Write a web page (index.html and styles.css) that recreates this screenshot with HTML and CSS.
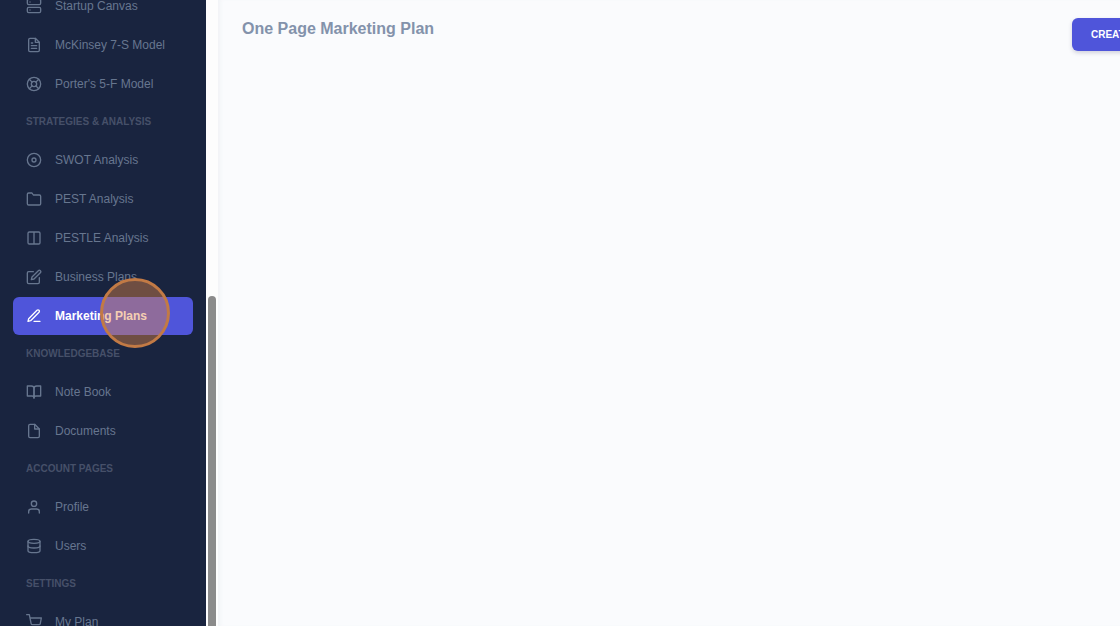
FILE: index.html
```html
<!DOCTYPE html>
<html lang="en">
<head>
    <meta charset="UTF-8">
    <meta name="viewport" content="width=device-width, initial-scale=1.0">
    <title>One Page Marketing Plan</title>
    <link rel="stylesheet" href="styles.css">
</head>
<body>
    <div class="app">
        <aside class="sidebar">
            <nav class="menu">
                <a href="#" class="menu-item">
                    <svg class="icon" viewBox="0 0 24 24"><rect x="2" y="2" width="20" height="8" rx="2"/><rect x="2" y="14" width="20" height="8" rx="2"/><path d="M6 6h.01M6 18h.01"/></svg>
                    Startup Canvas
                </a>
                <a href="#" class="menu-item">
                    <svg class="icon" viewBox="0 0 24 24"><path d="M14 2H6a2 2 0 0 0-2 2v16a2 2 0 0 0 2 2h12a2 2 0 0 0 2-2V8z"/><path d="M14 2v6h6M16 13H8M16 17H8M10 9H8"/></svg>
                    McKinsey 7-S Model
                </a>
                <a href="#" class="menu-item">
                    <svg class="icon" viewBox="0 0 24 24"><circle cx="12" cy="12" r="10"/><circle cx="12" cy="12" r="4"/><path d="M4.93 4.93l4.24 4.24M14.83 14.83l4.24 4.24M14.83 9.17l4.24-4.24M4.93 19.07l4.24-4.24"/></svg>
                    Porter's 5-F Model
                </a>

                <h6 class="menu-title">STRATEGIES &amp; ANALYSIS</h6>
                <a href="#" class="menu-item">
                    <svg class="icon" viewBox="0 0 24 24"><circle cx="12" cy="12" r="10"/><circle cx="12" cy="12" r="3"/></svg>
                    SWOT Analysis
                </a>
                <a href="#" class="menu-item">
                    <svg class="icon" viewBox="0 0 24 24"><path d="M22 19a2 2 0 0 1-2 2H4a2 2 0 0 1-2-2V5a2 2 0 0 1 2-2h5l2 3h9a2 2 0 0 1 2 2z"/></svg>
                    PEST Analysis
                </a>
                <a href="#" class="menu-item">
                    <svg class="icon" viewBox="0 0 24 24"><path d="M12 3h7a2 2 0 0 1 2 2v14a2 2 0 0 1-2 2h-7m0-18H5a2 2 0 0 0-2 2v14a2 2 0 0 0 2 2h7m0-18v18"/></svg>
                    PESTLE Analysis
                </a>
                <a href="#" class="menu-item">
                    <svg class="icon" viewBox="0 0 24 24"><path d="M11 4H4a2 2 0 0 0-2 2v14a2 2 0 0 0 2 2h14a2 2 0 0 0 2-2v-7"/><path d="M18.5 2.5a2.121 2.121 0 0 1 3 3L12 15l-4 1 1-4 9.5-9.5z"/></svg>
                    Business Plans
                </a>
                <a href="#" class="menu-item active">
                    <svg class="icon" viewBox="0 0 24 24"><path d="M12 20h9"/><path d="M16.5 3.5a2.121 2.121 0 0 1 3 3L7 19l-4 1 1-4L16.5 3.5z"/></svg>
                    Marketing Plans
                    <span class="click-marker"></span>
                </a>

                <h6 class="menu-title">KNOWLEDGEBASE</h6>
                <a href="#" class="menu-item">
                    <svg class="icon" viewBox="0 0 24 24"><path d="M2 3h6a4 4 0 0 1 4 4v14a3 3 0 0 0-3-3H2z"/><path d="M22 3h-6a4 4 0 0 0-4 4v14a3 3 0 0 1 3-3h7z"/></svg>
                    Note Book
                </a>
                <a href="#" class="menu-item">
                    <svg class="icon" viewBox="0 0 24 24"><path d="M13 2H6a2 2 0 0 0-2 2v16a2 2 0 0 0 2 2h12a2 2 0 0 0 2-2V9z"/><path d="M13 2v7h7"/></svg>
                    Documents
                </a>

                <h6 class="menu-title">ACCOUNT PAGES</h6>
                <a href="#" class="menu-item">
                    <svg class="icon" viewBox="0 0 24 24"><path d="M20 21v-2a4 4 0 0 0-4-4H8a4 4 0 0 0-4 4v2"/><circle cx="12" cy="7" r="4"/></svg>
                    Profile
                </a>
                <a href="#" class="menu-item">
                    <svg class="icon" viewBox="0 0 24 24"><ellipse cx="12" cy="5" rx="9" ry="3"/><path d="M21 12c0 1.66-4 3-9 3s-9-1.34-9-3"/><path d="M3 5v14c0 1.66 4 3 9 3s9-1.34 9-3V5"/></svg>
                    Users
                </a>

                <h6 class="menu-title">SETTINGS</h6>
                <a href="#" class="menu-item">
                    <svg class="icon" viewBox="0 0 24 24"><circle cx="9" cy="21" r="1"/><circle cx="20" cy="21" r="1"/><path d="M1 1h4l2.68 13.39a2 2 0 0 0 2 1.61h9.72a2 2 0 0 0 2-1.61L23 6H6"/></svg>
                    My Plan
                </a>
            </nav>
        </aside>
        <div class="scrollbar">
            <div class="scrollbar-thumb"></div>
        </div>
        <main class="content">
            <header class="page-header">
                <h1>One Page Marketing Plan</h1>
                <button type="button" class="btn-create">CREATE</button>
            </header>
        </main>
    </div>
</body>
</html>
```

FILE: styles.css
```css
* {
    box-sizing: border-box;
}
body {
    margin: 0;
    font-family: "Liberation Sans", Arial, sans-serif;
    background-color: #fafbfd;
}
.app {
    display: flex;
    height: 100vh;
    overflow: hidden;
}

/* Sidebar */
.sidebar {
    flex: 0 0 206px;
    padding: 0 13px;
    background-color: #19243f;
    overflow: hidden;
}
.menu {
    /* list is scrolled down */
    margin-top: -13px;
}
.menu-item {
    position: relative;
    display: flex;
    align-items: center;
    gap: 13px;
    height: 38px;
    margin-bottom: 1px;
    padding: 0 13px;
    border-radius: 6px;
    color: #67768f;
    font-size: 12px;
    text-decoration: none;
    white-space: nowrap;
}
.menu-item.active {
    background-color: #4f55da;
    color: #fff;
    font-weight: bold;
}
.icon {
    flex: none;
    width: 16px;
    height: 16px;
    fill: none;
    stroke: currentColor;
    stroke-width: 2;
    stroke-linecap: round;
    stroke-linejoin: round;
}
.menu-title {
    margin: 0;
    padding: 0 0 2px 13px;
    color: #465069;
    font-size: 10px;
    font-weight: bold;
    line-height: 35px;
}
.click-marker {
    position: absolute;
    top: -19px;
    left: 87px;
    z-index: 1;
    width: 70px;
    height: 70px;
    border: 3px solid #c27a45;
    border-radius: 50%;
    background-color: rgba(232, 139, 71, 0.42);
    pointer-events: none;
}

/* Scrollbar */
.scrollbar {
    flex: 0 0 12px;
    padding: 296px 2px 0;
    background-color: #fdfdfd;
}
.scrollbar-thumb {
    height: 100%;
    border-radius: 4px 4px 0 0;
    background-color: #8b8b8b;
}

/* Content */
.content {
    flex: 1;
    min-width: 0;
    padding: 18px 0 0 24px;
    box-shadow: inset 4px 0 4px -2px #f0f2f5;
}
.page-header {
    display: flex;
    align-items: flex-start;
    justify-content: space-between;
}
h1 {
    margin: 0;
    color: #8392ab;
    font-size: 16px;
    line-height: 21px;
}
.btn-create {
    flex: none;
    width: 96px;
    height: 33px;
    margin-right: -48px;
    padding: 0 19px;
    border: none;
    border-radius: 6px;
    background-color: #4f55da;
    box-shadow: 0 2px 4px rgba(50, 50, 93, 0.2);
    color: #fff;
    font-family: inherit;
    font-size: 10px;
    font-weight: bold;
    text-align: left;
    cursor: pointer;
}
```
